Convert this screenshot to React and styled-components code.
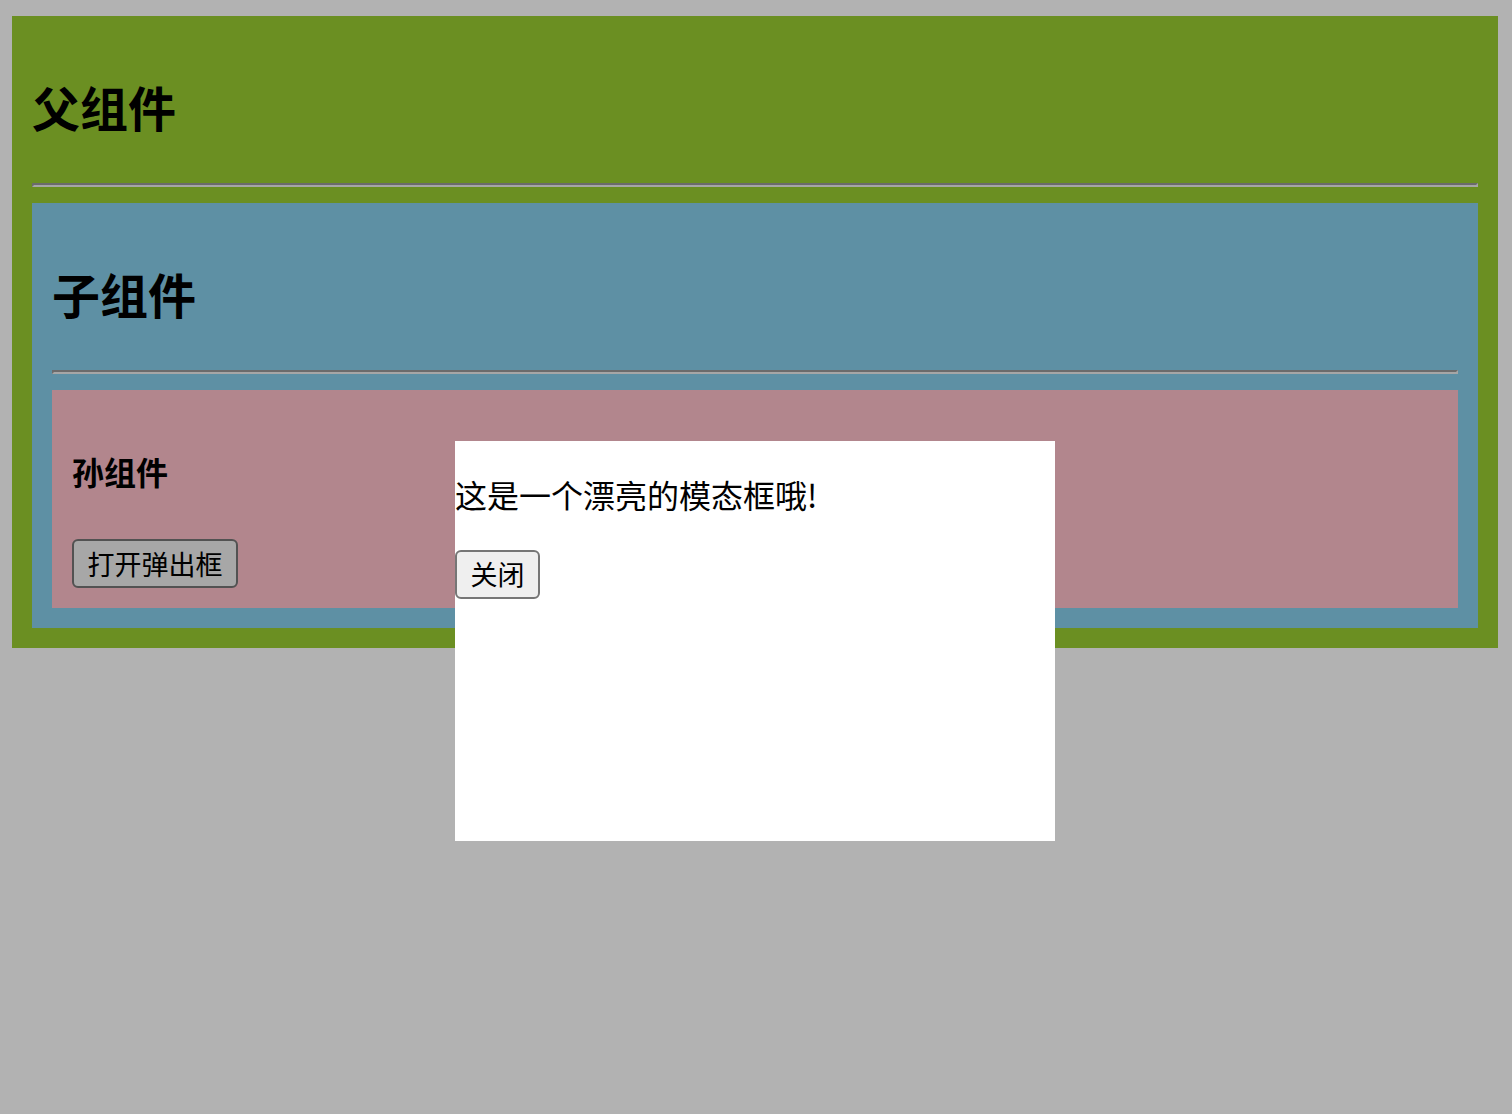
import React from 'react';
import styled, { createGlobalStyle } from 'styled-components';

const GlobalStyle = createGlobalStyle`
    html, body {
        margin: 0;
        padding: 0;
        background: #ffffff;
    }
    body {
        font-family: "Noto Sans CJK SC", "Noto Sans", sans-serif;
        color: #000;
    }
`;

const Page = styled.div`
    padding: 16px 14px 0 12px;
`;

const Box = styled.div`
    background-color: ${props => props.color};
    padding: 20px;
`;

const BigTitle = styled.h2`
    font-size: 48px;
    font-weight: bold;
    line-height: 67px;
    margin: 36.5px 0 43.5px 0;
`;

const SmallTitle = styled.h4`
    font-size: 32px;
    font-weight: bold;
    line-height: 46px;
    margin: 37.5px 0 45.5px 0;
`;

const Divider = styled.hr`
    height: 0;
    margin: 16px 0;
    border-style: solid;
    border-width: 2px;
    border-color: #9a9a9a #eeeeee #eeeeee #9a9a9a;
`;

const Button = styled.button`
    display: block;
    font-family: "Noto Sans CJK SC", "Noto Sans", sans-serif;
    font-size: 27px;
    line-height: 38px;
    padding: 3.5px 13.5px;
    color: #000;
    background: #efefef;
    border: 2px solid #767676;
    border-radius: 6px;
    cursor: pointer;
`;

const Overlay = styled.div`
    position: fixed;
    inset: 0;
    background: rgba(0, 0, 0, 0.3);
`;

const Modal = styled.div`
    position: absolute;
    top: 441px;
    left: 455px;
    width: 600px;
    height: 400px;
    background: #ffffff;
`;

const ModalText = styled.p`
    font-size: 32px;
    line-height: 46px;
    margin: 30px 0 32.5px 0;
    white-space: nowrap;
`;

function Grandchild({ onOpen }) {
    return (
        <Box color="pink">
            <SmallTitle>孙组件</SmallTitle>
            <Button onClick={onOpen}>打开弹出框</Button>
        </Box>
    );
}

export default function App() {
    const [open, setOpen] = React.useState(true);

    return (
        <Page>
            <GlobalStyle />
            <Box color="yellowgreen">
                <BigTitle>父组件</BigTitle>
                <Divider />
                <Box color="skyblue">
                    <BigTitle>子组件</BigTitle>
                    <Divider />
                    <Grandchild onOpen={() => setOpen(true)} />
                </Box>
            </Box>
            {open && (
                <Overlay>
                    <Modal>
                        <ModalText>这是一个漂亮的模态框哦!</ModalText>
                        <Button onClick={() => setOpen(false)}>关闭</Button>
                    </Modal>
                </Overlay>
            )}
        </Page>
    );
}
